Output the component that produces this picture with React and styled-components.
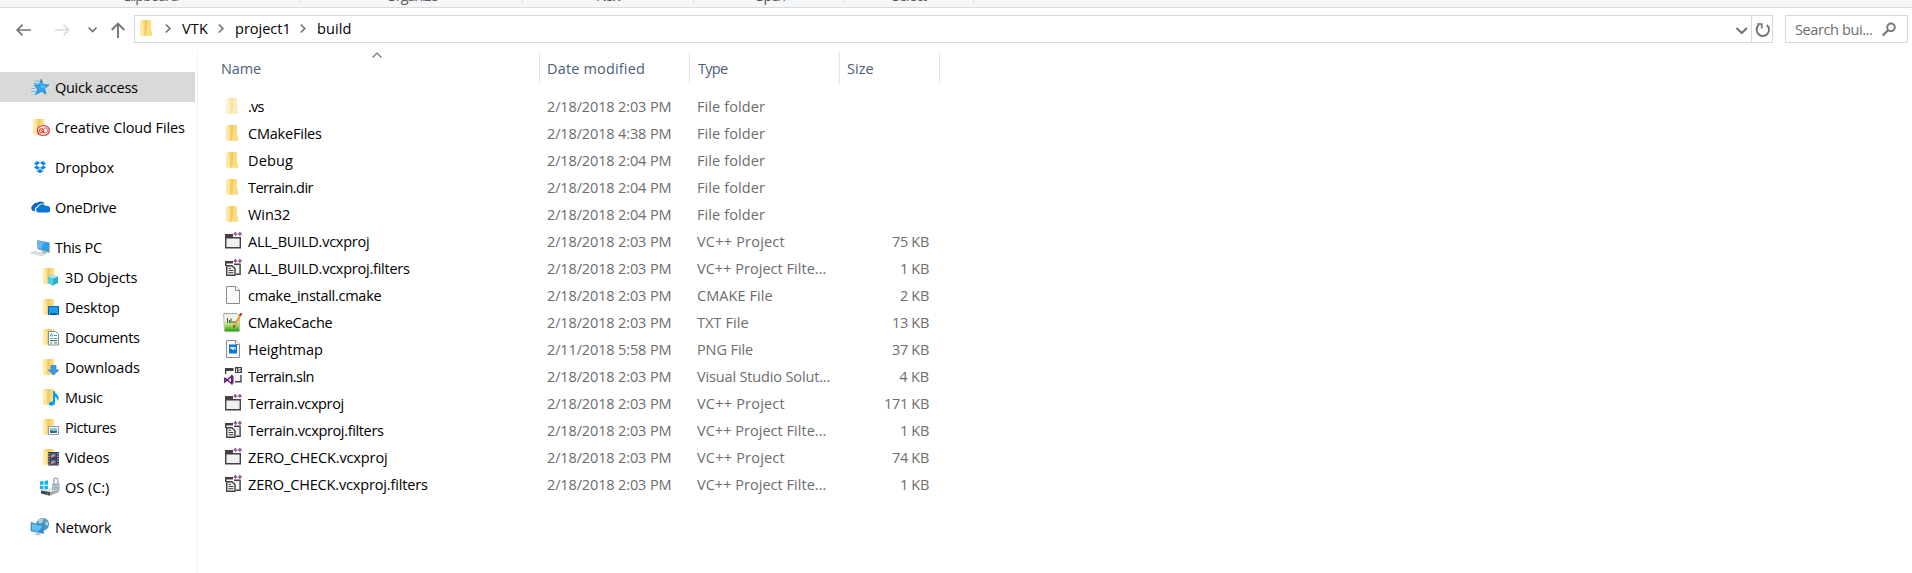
import React, { useLayoutEffect, useRef, useState } from 'react';
import styled, { createGlobalStyle } from 'styled-components';

const FONT = '"Open Sans", "Noto Sans", sans-serif';
const SIZE = 14.5;

const Global = createGlobalStyle`
  html, body { margin: 0; padding: 0; background: #fff; overflow: hidden; }
  * { box-sizing: border-box; }
  svg { display: block; flex: none; }
`;

const Window = styled.div`
  width: 100%;
  height: 573px;
  display: flex;
  flex-direction: column;
  overflow: hidden;
  background: #fff;
  color: #000;
  font: ${SIZE}px ${FONT};
`;

/* ---- fitted text ---- */
const FitSpan = styled.span`
  white-space: pre;
  flex: none;
`;

// Tracks the text so that its ink is `w` pixels wide.
function Fit({ w, children }) {
  const ref = useRef(null);
  const [ls, setLs] = useState(0);
  useLayoutEffect(() => {
    if (!w) return;
    const ctx = document.createElement('canvas').getContext('2d');
    const cs = getComputedStyle(ref.current);
    ctx.font = `${cs.fontSize} ${cs.fontFamily}`;
    const m = ctx.measureText(children);
    const ink = m.actualBoundingBoxRight + m.actualBoundingBoxLeft;
    setLs((w - ink) / (children.length - 1));
  }, [w, children]);
  return <FitSpan ref={ref} style={{ letterSpacing: `${ls}px` }}>{children}</FitSpan>;
}

/* ---- ribbon ---- */
const Ribbon = styled.div`
  flex: none;
  height: 8px;
  display: flex;
  background: #f5f6f7;
  border-bottom: 1px solid #dadbdc;
  overflow: hidden;
  color: #5a5a5a;
`;
const RibbonGroup = styled.div`
  flex: none;
  width: ${(p) => p.$w}px;
  height: 4px;
  display: flex;
  align-items: flex-end;
  justify-content: center;
  padding-bottom: 2px;
  border-right: 1px solid #e2e3e4;
  line-height: 12px;
`;

/* ---- address bar ---- */
const NavBar = styled.div`
  flex: none;
  height: 44px;
  display: flex;
  padding: 7px 4px 0 0;
`;
const NavButtons = styled.div`
  width: 134px;
  height: 28px;
  flex: none;
`;
const Address = styled.div`
  flex: 1;
  height: 28px;
  display: flex;
  align-items: center;
  border: 1px solid #d9d9d9;
`;
const Crumbs = styled.div`
  flex: 1;
  display: flex;
  align-items: center;
  height: 26px;
`;
const Crumb = styled.div`
  width: ${(p) => p.$w}px;
  padding: 0 0 2px 1px;
  flex: none;
`;
const AddressButton = styled.div`
  width: ${(p) => p.$w}px;
  height: 26px;
  flex: none;
  border-left: ${(p) => (p.$divided ? '1px solid #d9d9d9' : 'none')};
`;
const Search = styled.div`
  width: 123px;
  height: 28px;
  margin-left: 12px;
  padding-left: 9px;
  flex: none;
  display: flex;
  align-items: center;
  justify-content: space-between;
  border: 1px solid #d9d9d9;
  color: #6d6d6d;
`;

/* ---- body ---- */
const Body = styled.div`
  flex: 1;
  display: flex;
  min-height: 0;
`;
const Sidebar = styled.nav`
  width: 198px;
  flex: none;
  padding: 20px 2px 0 0;
  border-right: 1px solid #f2f2f2;
`;
const NavItem = styled.div`
  height: 30px;
  margin-bottom: ${(p) => (p.$gap ? 10 : 0)}px;
  padding-left: ${(p) => (p.$child ? 40 : 30)}px;
  display: flex;
  align-items: center;
  gap: 5px;
  background: ${(p) => (p.$selected ? '#d9d9d9' : 'transparent')};
`;
const Files = styled.main`
  flex: 1;
  padding-left: 13px;
`;
const HeaderRow = styled.div`
  display: flex;
  height: 32px;
  margin-bottom: 9px;
  color: #4c607a;
`;
const HeaderCell = styled.div`
  width: ${(p) => p.$w}px;
  height: 32px;
  padding-left: ${(p) => p.$pad}px;
  display: flex;
  align-items: center;
  border-right: 1px solid #e5e5e5;
  position: relative;
`;
const SortMark = styled.svg`
  position: absolute;
  left: 161px;
  top: 0;
`;
const FileRow = styled.div`
  height: 27px;
  display: flex;
  align-items: center;
  color: #6d6d6d;
`;
const NameCell = styled.div`
  width: 336px;
  padding-left: 12px;
  display: flex;
  align-items: center;
  gap: 5px;
  color: #000;
`;
const Cell = styled.div`
  width: 150px;
  white-space: pre;
`;
const SizeCell = styled.div`
  width: 82px;
  display: flex;
  justify-content: flex-end;
`;

/* ---- icons ---- */
const Svg = ({ children, w = 20, h = 20 }) => (
  <svg width={w} height={h} viewBox={`0 0 ${w} ${h}`} fill="none">{children}</svg>
);
const FolderShape = ({ x = 3, y = 1 }) => (
  <g transform={`translate(${x} ${y})`}>
    <path d="M2 0H11V10.5L12 11V15.5H3Z" fill="#f7d673" />
    <path d="M8 0H11V10.5L12 11V15.5H6Z" fill="#fadd7e" />
    <path d="M5 0H8L6 15.5H4Z" fill="#f1cc68" />
    <path d="M0 0L3.5 2.5V15L2.7 17L0 15Z" fill="#ffe9a6" />
  </g>
);
const Folder = ({ faded }) => (
  <Svg><g opacity={faded ? 0.55 : 1}><FolderShape /></g></Svg>
);
const PlusPlus = () => (
  <path d="M10.5 1.9H14.3M12.4 0V3.8M15 1.9H18.8M16.9 0V3.8" stroke="#9b4f96" strokeWidth="1.5" />
);
const Page = () => (
  <>
    <path d="M3.5 .5H13L16.5 4V17.5H3.5Z" fill="#fafafa" stroke="#8c8c8c" />
    <path d="M12.5 .5V4.5H16.5" fill="#fff" stroke="#8c8c8c" />
  </>
);

const icons = {
  folder: <Folder />,
  hidden: <Folder faded />,
  proj: (
    <Svg>
      <path d="M2 2H10V5H2Z" fill="#424242" />
      <path d="M2.7 5.7H17.3V15.8H2.7Z" fill="#f0eff1" stroke="#424242" strokeWidth="1.4" />
      <PlusPlus />
    </Svg>
  ),
  filters: (
    <Svg>
      <path d="M2 2H10V4.5H3.5V7H2Z" fill="#424242" />
      <path d="M10.5 5H16.5V15H13" fill="#f0eff1" />
      <path d="M11 5.3H17.1V15.3H13" stroke="#424242" strokeWidth="1.4" />
      <path d="M3.7 6.7H9L12 9.7V16.3H3.7Z" fill="#f0eff1" stroke="#424242" strokeWidth="1.4" />
      <path d="M5.5 9.3H8M5.5 11.5H10.3M5.5 13.7H10.3" stroke="#424242" strokeWidth="1" />
      <PlusPlus />
    </Svg>
  ),
  page: <Svg><Page /></Svg>,
  txt: (
    <Svg>
      <defs>
        <linearGradient id="green" x1="0" y1="0" x2="0" y2="1">
          <stop offset="0" stopColor="#f4f6f3" />
          <stop offset=".4" stopColor="#e9f5d8" />
          <stop offset=".65" stopColor="#a6dc5c" />
          <stop offset="1" stopColor="#1f9a10" />
        </linearGradient>
      </defs>
      <path d="M.5 .5H14L16.5 4V18.7H1.5Z" fill="url(#green)" stroke="#b5c3ae" />
      <path d="M1 .7H15" stroke="#8c8c8c" strokeDasharray="1 1" />
      <path d="M4.5 5V10M6.5 7V10M8 5.5V10M10 8V10M12 8V10" stroke="#4c5a48" strokeWidth="1.1" />
      <path d="M17.5 1.5L11.5 13" stroke="#e8a13a" strokeWidth="2.4" />
      <path d="M18.4 0L17 2.7" stroke="#b34a3c" strokeWidth="2.4" />
      <path d="M10.4 12L12.7 13.2L10.5 15Z" fill="#604020" />
    </Svg>
  ),
  png: (
    <Svg>
      <Page />
      <path d="M6 4.5H14V13.5H6Z" fill="#0b78d7" />
      <path d="M7.2 7H12.8V10L11.5 8.8L10.5 10.6L8.5 8.6L7.2 9Z" fill="#e9f4fd" />
      <path d="M10.7 7.8H12.2V9.2Z" fill="#0b78d7" />
    </Svg>
  ),
  sln: (
    <Svg>
      <path d="M2 1H10.5V4H3.5V7H2Z" fill="#424242" />
      <path d="M3.5 4H17V15H3.5Z" fill="#f3f2f5" />
      <path d="M12 0H19V6H12Z" fill="#424242" />
      <path d="M13.5 1.5V5M17.7 1.5H15.7V3H17.2V4.5H15.3" stroke="#fff" strokeWidth=".9" />
      <path d="M18 8V14.7H12" stroke="#424242" strokeWidth="1.4" />
      <path d="M1.7 10.8V15L8.7 9.2V16.7L1.7 10.8M1.7 15L4.5 13" stroke="#68217a" strokeWidth="1.5" />
      <path d="M8 8L10.5 9V16.2L8 17.2Z" fill="#68217a" />
    </Svg>
  ),
  star: (
    <Svg>
      <path d="M11.3 2.2L13 7.6L19 8L14.4 11.6L16 17.2L11.5 14.2L5.7 17.6L7.6 12L4.4 8.2L9.4 7.7Z" fill="#2ba3ee" stroke="#1781cf" strokeWidth=".8" />
      <path d="M11 4.5L12.5 8.3L16.5 8.9L13.3 11.3L11 11Z" fill="#58bdf8" />
      <path d="M4.5 4H9.5M3 6.5H8M1.5 11.5H5.5M1 14.5H5M4 17H6" stroke="#5fb5ec" strokeWidth=".9" />
    </Svg>
  ),
  cc: (
    <Svg>
      <FolderShape y={2} />
      <rect x="7.5" y="8.8" width="11.8" height="9.4" rx="4.7" fill="#fff" stroke="#da2323" strokeWidth="1.1" />
      <circle cx="11.4" cy="13.8" r="2.2" fill="#f9dca0" stroke="#da2323" strokeWidth=".9" />
      <path d="M11.4 13.8L13.5 11.7A2.5 2.5 0 1 1 15.3 15.9H14L11 13.4" stroke="#da2323" strokeWidth=".9" />
    </Svg>
  ),
  dropbox: (
    <Svg>
      <path d="M7.5 4L10 6L6.5 8.4L4 6.2ZM12.5 4L16 6.2L13.5 8.4L10 6ZM4 10.4L6.5 8.4L10 10.7L7.5 12.8ZM16 10.4L13.5 8.4L10 10.7L12.5 12.8ZM6.5 13L7.7 13.7L10 11.8L12.3 13.7L13.5 13V14L10 16.3L6.5 14Z" fill="#0d84ea" />
    </Svg>
  ),
  onedrive: (
    <Svg>
      <path d="M4 14.2A3.2 3.2 0 0 1 2.7 8.3A4.1 4.1 0 0 1 7.3 5.8A5.3 5.3 0 0 1 15 6.6C9.5 5.8 8 8 7.5 9.5C5.2 9.7 4.2 11.8 5 14.2Z" fill="#0a67bf" />
      <path d="M8 15.5A2.7 2.7 0 0 1 8.2 10.3A4.3 4.3 0 0 1 15.8 9A3.2 3.2 0 0 1 18 15.5Z" fill="#0877d8" />
    </Svg>
  ),
  pc: (
    <Svg>
      <path d="M7 3L19.7 5.5V16L7.5 12.2Z" fill="#8b98a3" />
      <path d="M8 4L18.8 6.2V14.6L8.3 11.3Z" fill="#28a0ed" />
      <path d="M8 4L14 5.2L11 12.1L8.3 11.3Z" fill="#5cbdf7" />
      <path d="M12.5 14L17 15.5L16 17L11.5 15.5Z" fill="#a9b1b7" />
      <path d="M.8 15.8L5 14.4L15 17L11.5 18.7Z" fill="#dfe3e6" stroke="#bfc5c9" strokeWidth=".7" />
    </Svg>
  ),
  objects: (
    <Svg>
      <FolderShape y={1} />
      <path d="M13 8L18 9.5V16L13 18.5L8 16V9.5Z" fill="#24b3c7" />
      <path d="M13 8L18 9.5L13 11.7L8 9.5Z" fill="#a8ecf2" />
      <path d="M8 9.5L13 11.7V18.5L8 16Z" fill="#55cddb" />
    </Svg>
  ),
  desktop: (
    <Svg>
      <FolderShape y={2} />
      <path d="M8.5 9.5H18.5V17.5H8.5Z" fill="#1b9ff1" stroke="#0b66b0" />
      <path d="M8 17H19" stroke="#0b4f88" strokeWidth="1.5" />
      <path d="M9 17H10M17 17H18" stroke="#dff" />
    </Svg>
  ),
  documents: (
    <Svg>
      <FolderShape y={2} />
      <path d="M8.5 4.5H15.5L18.5 7.5V18H8.5Z" fill="#fff" stroke="#858b90" />
      <path d="M10 9.5L11.5 6.5L12.5 9.5M13.5 8.5H17M10 11.5H12.5M13.5 11.5H17M10 16H12.5" stroke="#3c97cf" />
      <path d="M10 13.7H17M14 16H17" stroke="#487a5a" strokeWidth="1.2" />
    </Svg>
  ),
  downloads: (
    <Svg>
      <FolderShape y={2} />
      <path d="M11 8.5H16V13H18.8L13.5 18L8.5 13H11Z" fill="#3c97e8" stroke="#2878c4" strokeWidth=".7" />
    </Svg>
  ),
  music: (
    <Svg>
      <FolderShape y={2} />
      <path d="M13 4H14.5C15 7 19 8 18.7 11.5C18.5 13 18 13.8 17.5 14.5C17.8 11.5 16.5 10.5 15 10V16.3C14.8 18.5 9.5 20 9 17.3C8.8 15.2 11 14.3 13 14.5Z" fill="#079df3" />
    </Svg>
  ),
  pictures: (
    <Svg>
      <FolderShape y={2} />
      <path d="M8.5 9.5H18.5V17.5H8.5Z" fill="#fff" stroke="#94989c" />
      <path d="M10 11H17V16H10Z" fill="#8ec9ed" />
      <path d="M10 13L13 14L17 13.5V16H10Z" fill="#347080" />
    </Svg>
  ),
  videos: (
    <Svg>
      <FolderShape y={2} />
      <path d="M8 5H19V18.5H8Z" fill="#3a3a3c" />
      <path d="M9 6V18M18 6V18" stroke="#ddd" strokeWidth="1.1" strokeDasharray="1.3 1.3" />
      <path d="M10.7 6H16.3V11H10.7ZM10.7 12.4H16.3V17.5H10.7Z" fill="#2d62c4" />
      <path d="M11 9L13.5 7L16 9V10.7H11ZM11 15.5L13.5 13.5L16 15.5V17H11Z" fill="#e19b42" />
      <path d="M12.5 10L16 8V11H12ZM12.5 16.5L16 15V17.5H12Z" fill="#6a3fa0" />
    </Svg>
  ),
  os: (
    <Svg>
      <path d="M0 4.6L3.5 4V7.8H0ZM4.5 3.9L8 3.3V7.8H4.5ZM0 8.8H3.5V12.5L0 12ZM4.5 8.8H8V13.2L4.5 12.6Z" fill="#12b5ee" />
      <path d="M1 13.5L11 11L19 13L10 17.7Z" fill="#e5e7e8" />
      <path d="M1 13.5L10 15V18.7L1 16.5Z" fill="#46494c" />
      <path d="M10 15L19 12.5V15L10 18.7Z" fill="#a5a9ac" />
      <path d="M7.5 16.5V17.3" stroke="#7be87b" />
      <path d="M13.8 6.5V3.5C13.8 .5 18 .2 18 3.5V6" stroke="#a3abb0" strokeWidth="1.4" />
      <path d="M12 6.2L19.7 5.5V13L16 14L12 13Z" fill="#c4d0d8" />
      <path d="M12 7.5H19.5M12 10H19.5M12 12H19.5" stroke="#8197a5" strokeWidth=".8" />
    </Svg>
  ),
  network: (
    <Svg>
      <circle cx="12.7" cy="7.3" r="6.3" fill="#4b93b8" />
      <path d="M8 3.5C10 1 13 1 14 2.5L12 6L9 6.5ZM15 4L18 5.5L18.3 9L15.5 8Z" fill="#a8d2e2" />
      <path d="M1 5.5L13.5 8.5V16.5L1 14Z" fill="#2d8fd4" stroke="#4f86ac" strokeWidth=".6" />
      <path d="M2 6.7L12.7 9.2L8 14.6L2 13.3Z" fill="#62bef6" />
      <path d="M6 15.3L10 16V17.3L12.3 17.8L7 18.5L4.3 17.3L6 17Z" fill="#bcc4c9" />
    </Svg>
  ),
};

const CrumbArrow = () => (
  <svg width="26" height="26" viewBox="0 0 26 26" fill="none">
    <path d="M10.8 8.5L14.8 12.5L10.8 16.5" stroke="#757575" strokeWidth="1.7" />
  </svg>
);

/* ---- data ---- */
const places = [
  ['star', 'Quick access', 83, 0, 1],
  ['cc', 'Creative Cloud Files', 130, 0, 1],
  ['dropbox', 'Dropbox', 58.5, 0, 1],
  ['onedrive', 'OneDrive', 61.5, 0, 1],
  ['pc', 'This PC', 47, 0, 0],
  ['objects', '3D Objects', 72.5, 1, 0],
  ['desktop', 'Desktop', 54, 1, 0],
  ['documents', 'Documents', 74, 1, 0],
  ['downloads', 'Downloads', 74, 1, 0],
  ['music', 'Music', 37, 1, 0],
  ['pictures', 'Pictures', 50.5, 1, 0],
  ['videos', 'Videos', 44.5, 1, 0],
  ['os', 'OS (C:)', 44, 1, 1],
  ['network', 'Network', 56, 0, 0],
];

const D = '2/18/2018 2:03 PM';
const D4 = '2/18/2018 2:04 PM';
const FF = ['File folder', 67];
const VP = ['VC++ Project', 87.5];
const VF = ['VC++ Project Filte...', 128.5];
const files = [
  ['hidden', '.vs', 15.5, D, FF],
  ['folder', 'CMakeFiles', 74, '2/18/2018 4:38 PM', FF],
  ['folder', 'Debug', 44, D4, FF],
  ['folder', 'Terrain.dir', 65.5, D4, FF],
  ['folder', 'Win32', 42, D4, FF],
  ['proj', 'ALL_BUILD.vcxproj', 121, D, VP, '75 KB', 37],
  ['filters', 'ALL_BUILD.vcxproj.filters', 162, D, VF, '1 KB', 28],
  ['page', 'cmake_install.cmake', 133.5, D, ['CMAKE File', 75.5], '2 KB', 29],
  ['txt', 'CMakeCache', 84.5, D, ['TXT File', 51.5], '13 KB', 36],
  ['png', 'Heightmap', 74, '2/11/2018 5:58 PM', ['PNG File', 55], '37 KB', 37],
  ['sln', 'Terrain.sln', 65.5, D, ['Visual Studio Solut...', 132.5], '4 KB', 29.5],
  ['proj', 'Terrain.vcxproj', 95.5, D, VP, '171 KB', 44],
  ['filters', 'Terrain.vcxproj.filters', 136, D, VF, '1 KB', 28],
  ['proj', 'ZERO_CHECK.vcxproj', 139, D, VP, '74 KB', 37],
  ['filters', 'ZERO_CHECK.vcxproj.filters', 180, D, VF, '1 KB', 28],
];

export default function App() {
  return (
    <Window>
      <Global />
      <Ribbon>
        <RibbonGroup $w={301}><Fit w={56}>Clipboard</Fit></RibbonGroup>
        <RibbonGroup $w={222}><Fit w={52}>Organize</Fit></RibbonGroup>
        <RibbonGroup $w={171}><Fit w={26}>New</Fit></RibbonGroup>
        <RibbonGroup $w={151}><Fit w={31}>Open</Fit></RibbonGroup>
        <RibbonGroup $w={129}><Fit w={35}>Select</Fit></RibbonGroup>
      </Ribbon>
      <NavBar>
        <NavButtons>
          <svg width="134" height="28" viewBox="0 0 134 28" fill="none">
            <path d="M31 15H17.5M22.5 9.7L17.2 15L22.5 20.3" stroke="#757575" strokeWidth="1.7" />
            <path d="M55 15H68.5M63.5 9.7L68.8 15L63.5 20.3" stroke="#dcdcdc" strokeWidth="1.7" />
            <path d="M88.7 12.7L92.6 16.5L96.5 12.7" stroke="#757575" strokeWidth="1.7" />
            <path d="M118 23V9.5M111.7 15L118 8.7L124.3 15" stroke="#757575" strokeWidth="1.9" />
          </svg>
        </NavButtons>
        <Address>
          <Crumbs>
            <Svg w={20} h={26}><FolderShape x={5} y={4} /></Svg>
            <CrumbArrow />
            <Crumb $w={27}><Fit w={26}>VTK</Fit></Crumb>
            <CrumbArrow />
            <Crumb $w={56}><Fit w={52.5}>project1</Fit></Crumb>
            <CrumbArrow />
            <Crumb $w={40}><Fit w={32.5}>build</Fit></Crumb>
          </Crumbs>
          <AddressButton $w={20}>
            <svg width="20" height="26" viewBox="0 0 20 26" fill="none">
              <path d="M5.5 12L10.7 17L15.9 12" stroke="#757575" strokeWidth="2.1" />
            </svg>
          </AddressButton>
          <AddressButton $w={21} $divided>
            <svg width="20" height="26" viewBox="0 0 20 26" fill="none">
              <path d="M14.8 9A6.2 6.2 0 1 1 6.8 9" stroke="#757575" strokeWidth="1.9" />
              <path d="M5 8H9.7V12.5" stroke="#757575" strokeWidth="1.7" />
            </svg>
          </AddressButton>
        </Address>
        <Search>
          <Fit w={77}>Search bui...</Fit>
          <svg width="25" height="26" viewBox="0 0 25 26" fill="none">
            <circle cx="9" cy="11.3" r="3.8" stroke="#757575" strokeWidth="1.9" />
            <path d="M6.3 14L.8 19.5" stroke="#757575" strokeWidth="2.2" />
          </svg>
        </Search>
      </NavBar>
      <Body>
        <Sidebar>
          {places.map(([icon, label, w, child, gap], i) => (
            <NavItem key={label} $child={child} $gap={gap} $selected={i === 0}>
              {icons[icon]}
              <Fit w={w}>{label}</Fit>
            </NavItem>
          ))}
        </Sidebar>
        <Files>
          <HeaderRow>
            <HeaderCell $w={329} $pad={10}>
              <Fit w={39}>Name</Fit>
              <SortMark width="10" height="6" viewBox="0 0 10 6" fill="none">
                <path d="M.5 5.5L5 1L9.5 5.5" stroke="#6d6d6d" strokeWidth="1.1" />
              </SortMark>
            </HeaderCell>
            <HeaderCell $w={150} $pad={7}><Fit w={96}>Date modified</Fit></HeaderCell>
            <HeaderCell $w={150} $pad={8}><Fit w={30}>Type</Fit></HeaderCell>
            <HeaderCell $w={100} $pad={7}><Fit w={26.5}>Size</Fit></HeaderCell>
          </HeaderRow>
          {files.map(([icon, name, w, date, type, size, sw]) => (
            <FileRow key={name}>
              <NameCell>{icons[icon]}<Fit w={w}>{name}</Fit></NameCell>
              <Cell><Fit w={123.5}>{date}</Fit></Cell>
              <Cell><Fit w={type[1]}>{type[0]}</Fit></Cell>
              <SizeCell>{size && <Fit w={sw}>{size}</Fit>}</SizeCell>
            </FileRow>
          ))}
        </Files>
      </Body>
    </Window>
  );
}
